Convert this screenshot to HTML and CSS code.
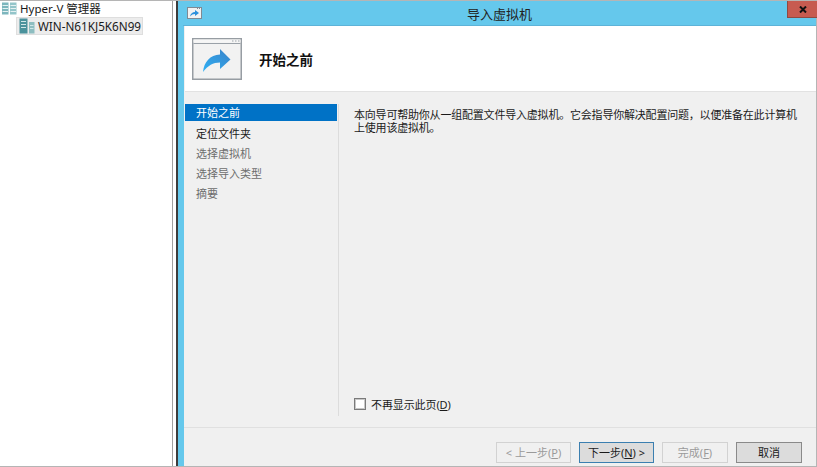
FILE: index.html
```html
<!DOCTYPE html>
<html lang="zh-CN">
<head>
  <meta charset="UTF-8">
  <meta name="viewport" content="width=device-width, initial-scale=1.0">
  <title>导入虚拟机</title>
  <link rel="stylesheet" href="styles.css">
</head>
<body>
  <div class="screen">
    <div class="tree">
      <div class="tree-root">
        <svg class="tree-icon" width="15" height="13" viewBox="0 0 15 13">
          <rect x="0" y="0.500" width="6.500" height="12" fill="#7db6bd"/>
          <rect x="8" y="0.500" width="6.500" height="12" fill="#93c5ca"/>
          <path d="M0.500 3.500h5.500M0.500 6.500h5.500M0.500 9.500h5.500M8.500 3.500h5.500M8.500 6.500h5.500M8.500 9.500h5.500" stroke="#e4f1f2" stroke-width="1"/>
        </svg>
        <span>Hyper-V 管理器</span>
      </div>
      <div class="tree-node">
        <svg class="tree-icon" width="16" height="16" viewBox="0 0 16 16">
          <rect x="0.500" y="0.500" width="8" height="15" fill="#4a929c"/>
          <rect x="10" y="4" width="5.500" height="11.500" fill="#8dbdc0"/>
          <path d="M2 3.500h5M2 6.500h5M2 9.500h5M11 7.500h3.500M11 10.500h3.500" stroke="#cfe6e8" stroke-width="1"/>
        </svg>
        <span>WIN-N61KJ5K6N99</span>
      </div>
    </div>
    <div class="splitter"></div>
    <div class="wizard">
      <div class="titlebar">
        <svg class="title-icon" width="15" height="12" viewBox="0 0 15 12">
          <rect x="0.500" y="0.500" width="14" height="11" fill="#f2f2f2" stroke="#7f8a94"/>
          <path d="M10 1.500h1M12 1.500h1" stroke="#7f8a94"/>
          <path d="M3 9.500c.5-3 2.500-4.500 5-4.500V3l4 3-4 3V7c-2 0-3.500.8-5 2.500z" fill="#2b90dc"/>
        </svg>
        <span class="title-text">导入虚拟机</span>
        <div class="close-btn">
          <svg width="8" height="7" viewBox="0 0 8 7">
            <path d="M1 0.500l6 6M7 0.500l-6 6" stroke="#111" stroke-width="2"/>
          </svg>
        </div>
      </div>
      <div class="header">
        <svg class="header-icon" width="50" height="42" viewBox="0 0 50 42">
          <defs>
            <linearGradient id="arrow" x1="0" y1="1" x2="1" y2="0">
              <stop offset="0" stop-color="#2fb0f4"/>
              <stop offset="1" stop-color="#3a82c8"/>
            </linearGradient>
          </defs>
          <rect x="0.750" y="0.750" width="48.500" height="40.500" fill="#f2f2f2" stroke="#979da3" stroke-width="1.500"/>
          <rect x="1.500" y="1.500" width="47" height="3" fill="#f6f6f6"/>
          <path d="M1.500 5.500h47" stroke="#9aa1a8" stroke-width="1"/>
          <path d="M40 3h1.500M43 3h1.500M46 3h1.500" stroke="#9aa1a8" stroke-width="1"/>
          <path d="M11 34c1-10 7-17 17-17.500V11l10.500 10.500L28 31v-6.500c-7 0-12 3-17 9.500z" fill="url(#arrow)"/>
        </svg>
        <span class="header-title">开始之前</span>
      </div>
      <div class="body">
        <div class="nav">
          <div class="nav-item selected">开始之前</div>
          <div class="nav-item active">定位文件夹</div>
          <div class="nav-item">选择虚拟机</div>
          <div class="nav-item">选择导入类型</div>
          <div class="nav-item">摘要</div>
        </div>
        <div class="content">
          <p class="intro">本向导可帮助你从一组配置文件导入虚拟机。它会指导你解决配置问题，以便准备在此计算机上使用该虚拟机。</p>
          <label class="skip">
            <span class="checkbox"></span>
            <span>不再显示此页(<u>D</u>)</span>
          </label>
        </div>
      </div>
      <div class="footer">
        <button class="btn back" disabled>&lt; 上一步(<u>P</u>)</button>
        <button class="btn next">下一步(<u>N</u>) &gt;</button>
        <button class="btn finish" disabled>完成(<u>F</u>)</button>
        <button class="btn cancel">取消</button>
      </div>
    </div>
  </div>
</body>
</html>
```

FILE: styles.css
```css
/* General Styles */
* {
  box-sizing: border-box;
}

body {
  margin: 0;
  width: 817px;
  height: 467px;
  overflow: hidden;
  font-family: "Noto Sans", "Noto Sans CJK SC", sans-serif;
  font-size: 11px;
  color: #1a1a1a;
}

.screen {
  display: flex;
  height: 467px;
  background-color: white;
  border-top: 1px solid #b5b5b5;
  border-right: 1px solid #b5b5b5;
  border-bottom: 1px solid #b5b5b5;
}

/* Tree */
.tree {
  width: 172px;
  flex: none;
}

.tree-root {
  display: flex;
  align-items: center;
  gap: 3px;
  height: 14px;
  padding-left: 2px;
  font-size: 11.500px;
}

.tree-node {
  display: flex;
  align-items: center;
  gap: 3px;
  width: 127px;
  height: 18px;
  margin: 2px 0 0 16px;
  padding-left: 2px;
  background-color: #ececec;
  border: 1px solid #dedede;
  font-size: 11.700px;
  white-space: nowrap;
}

.tree-icon {
  flex: none;
}

.splitter {
  width: 6px;
  flex: none;
  border-left: 1px solid #a0a0a0;
  border-right: 2px solid #3c3c3c;
}

/* Wizard */
.wizard {
  flex: 1;
  display: flex;
  flex-direction: column;
  min-width: 0;
  background-color: #f0f0f0;
  border-left: 6px solid #65c8ec;
}

.titlebar {
  display: flex;
  align-items: center;
  justify-content: center;
  position: relative;
  height: 25px;
  flex: none;
  margin-left: -1px;
  background-color: #65c8ec;
  border-bottom: 1px solid #5db3d8;
  font-size: 13px;
  color: #222;
}

.title-icon {
  position: absolute;
  left: 4px;
  top: 6px;
}

.close-btn {
  position: absolute;
  right: -1px;
  top: 0;
  width: 30px;
  height: 17px;
  display: flex;
  align-items: center;
  justify-content: center;
  background-color: #c75b50;
  border-left: 1px solid #8f4a42;
  border-bottom: 1px solid #8f4a42;
}

.header {
  display: flex;
  align-items: center;
  gap: 17px;
  height: 66px;
  flex: none;
  margin-left: 1px;
  padding-left: 7px;
  background-color: white;
  border-bottom: 1px solid #e2e2e2;
}

.header-title {
  font-size: 13.500px;
  font-weight: 700;
  color: #111;
}

.body {
  flex: 1;
  display: flex;
  min-height: 0;
  padding-top: 12px;
  border-bottom: 1px solid #e0e0e0;
}

.nav {
  width: 154px;
  flex: none;
  margin: 0 0 11px 1px;
  border-right: 1px solid #dcdcdc;
}

.nav-item {
  height: 20px;
  padding-left: 11px;
  line-height: 19px;
  color: #6d6d6d;
}

.nav-item.selected {
  height: 17px;
  margin: 0 1px 3px 0;
  line-height: 18px;
  background-color: #0072c6;
  color: white;
}

.nav-item.active {
  color: #1a1a1a;
}

.content {
  flex: 1;
  display: flex;
  flex-direction: column;
  padding: 4px 15px 15px;
}

.intro {
  margin: 0;
  line-height: 13px;
  letter-spacing: -0.200px;
}

.skip {
  display: flex;
  align-items: center;
  gap: 5px;
  margin-top: auto;
  letter-spacing: -0.100px;
}

.checkbox {
  width: 12px;
  height: 12px;
  background-color: white;
  border: 1px solid #7a7a7a;
  box-shadow: inset 0 0 0 1px #c8c8c8;
}

/* Footer */
.footer {
  display: flex;
  justify-content: flex-end;
  align-items: flex-start;
  gap: 8px;
  height: 38px;
  flex: none;
  padding: 14px 14px 0 0;
}

.btn {
  height: 21px;
  padding: 0;
  font-family: inherit;
  font-size: 11px;
  line-height: 17px;
  color: #1a1a1a;
  background-color: #dcdcdc;
  border: 1px solid #8a8a8a;
}

.back,
.next {
  width: 75px;
}

.finish,
.cancel {
  width: 66px;
}

.next {
  border-color: #3b7fb0;
}

.btn:disabled {
  background-color: #f0f0f0;
  border-color: #d2d2d2;
  color: #9a9a9a;
}
```
